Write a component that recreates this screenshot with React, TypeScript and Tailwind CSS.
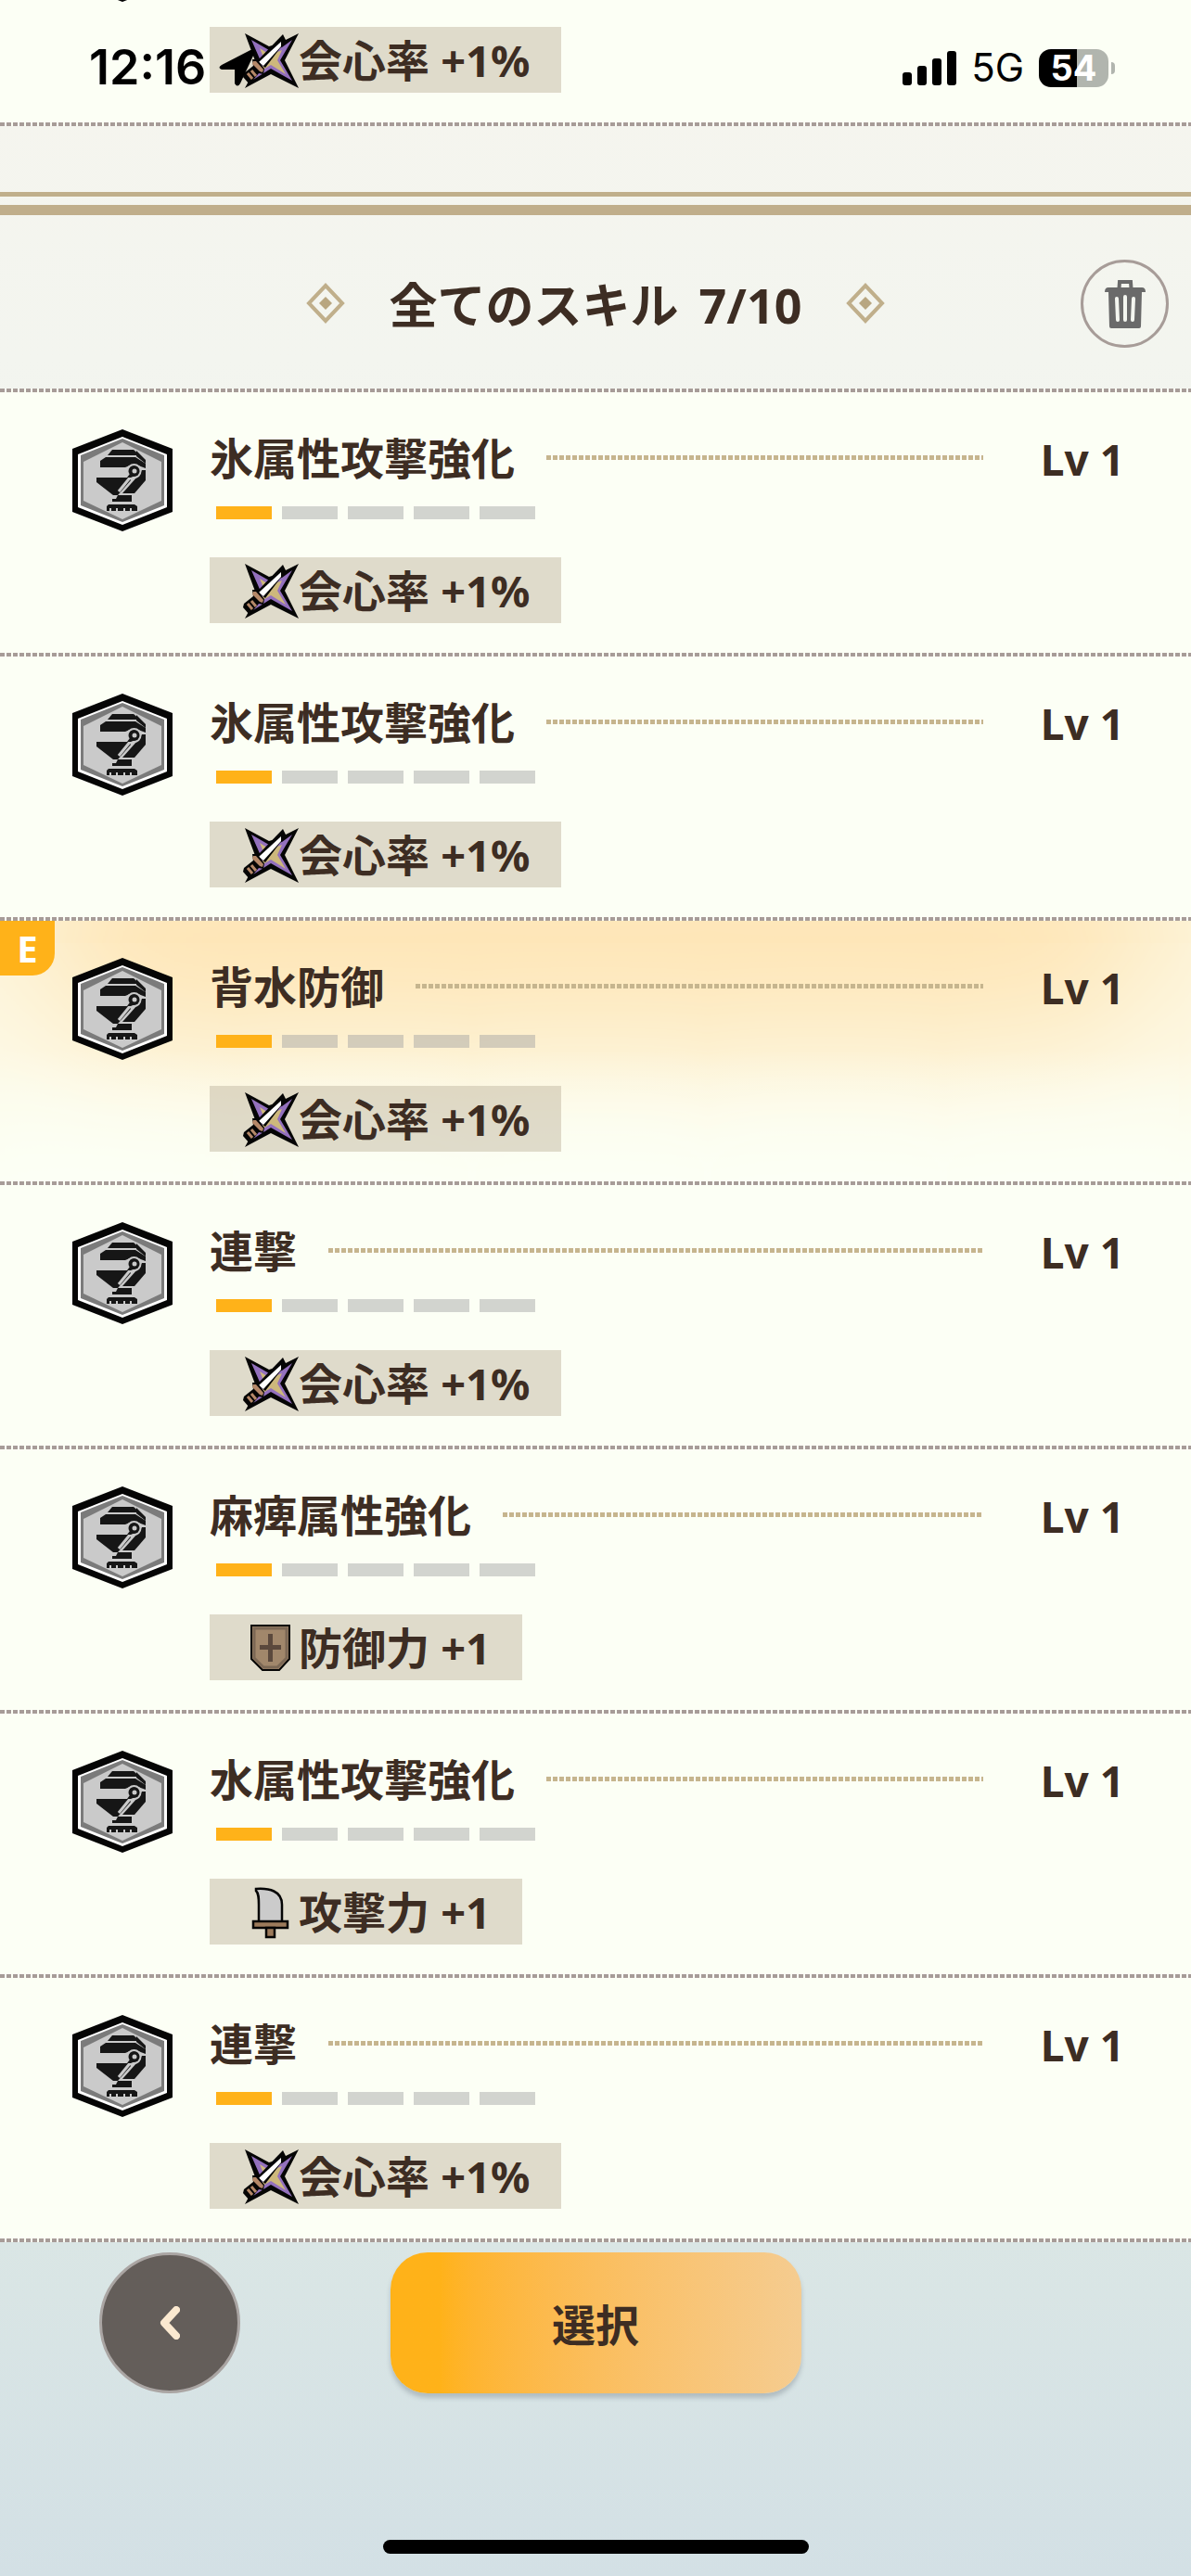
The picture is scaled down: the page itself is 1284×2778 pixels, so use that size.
import React from "react";

type StatKind = "critical" | "defense" | "attack";

type Skill = {
  name: string;
  level: number;
  max: number;
  stat: StatKind;
  equipped?: boolean;
};

const STATS: Record<StatKind, string> = {
  critical: "会心率 +1%",
  defense: "防御力 +1",
  attack: "攻撃力 +1",
};

const SKILLS: Skill[] = [
  { name: "氷属性攻撃強化", level: 1, max: 5, stat: "critical" },
  { name: "氷属性攻撃強化", level: 1, max: 5, stat: "critical" },
  { name: "背水防御", level: 1, max: 5, stat: "critical", equipped: true },
  { name: "連撃", level: 1, max: 5, stat: "critical" },
  { name: "麻痺属性強化", level: 1, max: 5, stat: "defense" },
  { name: "水属性攻撃強化", level: 1, max: 5, stat: "attack" },
  { name: "連撃", level: 1, max: 5, stat: "critical" },
];

function Separator() {
  return (
    <div className="h-1 w-full bg-[#fcfff5] bg-[repeating-linear-gradient(90deg,#a79c98_0px,#a79c98_5px,transparent_5px,transparent_7px)]" />
  );
}

function HexIcon({ className }: { className?: string }) {
  return (
    <svg viewBox="0 0 108 110" className={className} aria-hidden="true">
      <path d="M54 0 108 21V89L54 110 0 89V21Z" fill="#050505" />
      <path d="M54 8 102 27V84L54 103 6 84V27Z" fill="#fff" />
      <path d="M54 10 99 28V82L54 100 9 82V28Z" fill="#7b7b7b" />
      <path d="M54 14 96 35V77L54 97 12 77V35Z" fill="#cacaca" />
      <g fill="#161616">
        <path d="M43 22H66L73 28H38Z" />
        <path d="M30 34 36 30H68L79 37V42L71 39H62L57 41H30Z" />
        <path d="M69 23 79 33V37L69 29Z" />
        <path d="M26 52H61L63 55 49 71H44L26 57Z" />
        <path d="M79 44V55L67 69H54L70 51 75 44Z" />
        <path d="M49 71H64V78H43V75H47Z" />
        <path d="M39 81H67L70 83V88H37V83Z" />
      </g>
      <path d="M63 51 50 67" stroke="#cacaca" strokeWidth="3" />
      <circle cx="66.500" cy="45" r="8" fill="#cacaca" />
      <path d="M62 48 59 52H63L70 49Z" fill="#161616" />
      <circle cx="66.500" cy="45" r="6" fill="#161616" />
      <circle cx="67" cy="45" r="2.500" fill="#cacaca" />
      <path d="M40 85h2v3h-2zM47 85h2v3h-2zM55 85h2v3h-2zM62 85h2v3h-2z" fill="#cacaca" />
    </svg>
  );
}

function CriticalIcon() {
  return (
    <svg viewBox="0 0 60 60" className="size-[60px]" aria-hidden="true">
      <path d="M2 1 28 15 42 11 43 2 46 8 60 1 45 30 60 60 30 45 2 60 15 36Z" fill="#050505" />
      <path d="M9 8 28 19 42 16 53 8 40 30 53 52 30 39 11 51 20 33Z" fill="#9370bd" />
      <path d="M18 17 29 24 42 19 37 30 46 45 30 35 20 41 23 29Z" fill="#cdb87c" />
      <path d="M43 2V13L24 38 15 31Z" fill="#050505" />
      <path d="M41 10V15L22 36 17 32Z" fill="#fff" />
      <path d="M10 29 15 29 23 39 22 45 17 44 7 56 0 48 1 44 11 36Z" fill="#050505" />
      <path d="M11 31 14 31 22 40 21 43 18 42 10 34Z" fill="#b58868" />
      <path d="M9 41 14 47M5 44 10 50" stroke="#b58868" strokeWidth="3" />
    </svg>
  );
}

function DefenseIcon() {
  return (
    <svg viewBox="0 0 60 60" className="size-[60px]" aria-hidden="true">
      <path d="M9 6H50V42L39 54H21L9 42Z" fill="#a1876b" stroke="#050505" strokeWidth="2" />
      <path d="M12 9H47V41L37 51H22L12 41Z" fill="none" stroke="#7c6855" strokeWidth="3" />
      <path d="M29.500 15V45M18 29.500H41" stroke="#5b493d" strokeWidth="5" />
    </svg>
  );
}

function AttackIcon() {
  return (
    <svg viewBox="0 0 60 60" className="size-[60px]" aria-hidden="true">
      <path
        d="M14 5C28 4 42 7 42 22V41H17V22C17 15 17 10 14 7Z"
        fill="#cbcbcb"
        stroke="#050505"
        strokeWidth="2.500"
      />
      <path d="M11 40H48V47H11Z" fill="#9c7a5b" stroke="#050505" strokeWidth="2.500" />
      <path d="M25 47H34V57H25Z" fill="#9c7a5b" stroke="#050505" strokeWidth="2.500" />
    </svg>
  );
}

function StatChip({ kind }: { kind: StatKind }) {
  return (
    <div className="flex h-[71px] w-fit items-center bg-[#c2b7a1]/50 pr-[34px] pl-9 text-[47px] leading-none font-bold whitespace-nowrap">
      {kind === "critical" && <CriticalIcon />}
      {kind === "defense" && <DefenseIcon />}
      {kind === "attack" && <AttackIcon />}
      <span className="pt-0.5">{STATS[kind]}</span>
    </div>
  );
}

function SkillRow({ skill }: { skill: Skill }) {
  return (
    <li>
      <div className="relative bg-[#fcfff5]">
        {skill.equipped && (
          <>
            <div className="absolute inset-0 bg-linear-to-b from-[#fee5b4] from-50% to-[#fcfff5] shadow-[inset_0_-115px_180px_20px_#fcfff5]" />
            <span className="absolute top-0 left-0 flex size-[59px] items-center justify-center rounded-br-3xl bg-[#ffb219] text-[40px] leading-none font-bold text-white">
              E
            </span>
          </>
        )}
        <div className="relative flex gap-10 pt-10 pr-[72px] pb-8 pl-[78px]">
          <HexIcon className="h-[110px] w-[108px] shrink-0" />
          <div className="min-w-0 flex-1">
            <div className="flex h-[61px] items-center text-[47px] leading-none font-bold">
              <h2 className="pt-0.5 whitespace-nowrap">{skill.name}</h2>
              <div className="mx-[34px] h-[5px] flex-1 bg-[repeating-linear-gradient(90deg,#c6b58e_0px,#c6b58e_5px,transparent_5px,transparent_7px)]" />
              <span className="w-[118px] pt-0.5 text-right text-[46px] whitespace-nowrap">Lv {skill.level}</span>
            </div>
            <div className="mt-[22px] flex gap-[11px] pl-[7px]">
              {Array.from({ length: skill.max }, (_, i) => (
                <span
                  key={i}
                  className={i < skill.level ? "h-3.5 w-[60px] bg-[#ffb219]" : "h-3.5 w-[60px] bg-[#a2a2a2]/46"}
                />
              ))}
            </div>
            <div className="mt-[41px]">
              <StatChip kind={skill.stat} />
            </div>
          </div>
        </div>
      </div>
      <Separator />
    </li>
  );
}

function StatusBar() {
  return (
    <div className="absolute inset-x-0 top-0 flex h-[146px] items-center justify-between pr-[82px] pl-24 font-['Inter',sans-serif] text-black">
      <div className="flex items-center gap-3.5">
        <span className="text-[52px] leading-none font-semibold">12:16</span>
        <svg viewBox="0 0 40 40" className="size-10" aria-hidden="true">
          <path d="M3 17 34 1Q39 0 38 5L23 37Q20 42 17 37V22H3Q-2 20 3 17Z" fill="#000" />
        </svg>
      </div>
      <div className="flex items-center">
        <div className="flex items-end gap-1.5">
          <span className="h-3.5 w-2.5 rounded-[3px] bg-black" />
          <span className="h-[21px] w-2.5 rounded-[3px] bg-black" />
          <span className="h-[29px] w-2.5 rounded-[3px] bg-black" />
          <span className="h-[37px] w-2.5 rounded-[3px] bg-black" />
        </div>
        <span className="ml-4 text-[42px] leading-none">5G</span>
        <div className="ml-4 flex items-center gap-[3px]">
          <div className="flex h-[41px] w-[75px] items-center justify-center rounded-[13px] bg-linear-to-r from-black from-55% to-[#b1b5ae] to-55% text-[38px] leading-none font-bold text-white">
            54
          </div>
          <span className="h-[13px] w-1 rounded-r-full bg-[#b1b5ae]" />
        </div>
      </div>
    </div>
  );
}

function Diamond() {
  return (
    <svg viewBox="0 0 42 44" className="h-11 w-[42px]" aria-hidden="true">
      <path d="M21 3 39 22 21 41 3 22Z" fill="none" stroke="#c0af8b" strokeWidth="4" />
      <path d="M21 15 28 22 21 29 14 22Z" fill="#b8a680" />
    </svg>
  );
}

function TrashIcon() {
  return (
    <svg viewBox="0 0 44 52" className="h-[52px] w-11" aria-hidden="true">
      <path d="M15.500 9 16 2H28L28.500 9" fill="none" stroke="#6a6a6a" strokeWidth="4" />
      <path d="M0 13Q0 8 4 8H40Q44 8 44 13Z" fill="#6a6a6a" />
      <path d="M4 12H40L39 50Q39 52 37 52H7Q5 52 5 50Z" fill="#6a6a6a" />
      <path d="M13 20 14 43M22 18V43M31 20 30 43" stroke="#f4f6f0" strokeWidth="4" strokeLinecap="round" />
    </svg>
  );
}

export default function App() {
  return (
    <div className="relative flex min-h-screen flex-col overflow-hidden bg-linear-to-b from-[#f6f5ee] via-[#f3f5ef] via-14% to-[#d3e0e5] font-['Noto_Sans','Noto_Sans_CJK_JP',sans-serif] text-[#3d2d23]">
      <div className="relative overflow-hidden bg-[#fcfff5] pt-[29px] pb-8 pl-[226px]">
        <HexIcon className="absolute -top-[108px] left-[78px] h-[110px] w-[108px]" />
        <StatChip kind="critical" />
      </div>
      <Separator />
      <StatusBar />

      <header className="mt-[71px]">
        <div className="h-[5px] bg-[#c0af8b]" />
        <div className="mt-[9px] h-[11px] bg-[#c0ae8b]" />
        <div className="relative flex h-[187px] items-center justify-center gap-12 pt-0.5">
          <Diamond />
          <h1 className="flex gap-[22px] pt-1 text-[52px] leading-none font-bold whitespace-nowrap">
            <span>全てのスキル</span>
            <span>7/10</span>
          </h1>
          <Diamond />
          <button
            type="button"
            aria-label="削除"
            className="absolute top-12 right-6 flex size-[95px] items-center justify-center rounded-full border-[3px] border-[#a79c98]"
          >
            <TrashIcon />
          </button>
        </div>
        <Separator />
      </header>

      <ul>
        {SKILLS.map((skill, i) => (
          <SkillRow key={i} skill={skill} />
        ))}
      </ul>

      <footer className="flex flex-1 flex-col items-center bg-linear-to-b from-[#dae6e5] to-[#d3e0e5] pt-[11px] pb-6">
        <div className="relative flex w-full justify-center">
          <button
            type="button"
            aria-label="戻る"
            className="absolute top-0 left-[107px] flex size-[152px] items-center justify-center rounded-full border-[3px] border-[#aaa5a3] bg-[#645e5a]"
          >
            <svg viewBox="0 0 22 36" className="h-9 w-[22px]" fill="none" aria-hidden="true">
              <path d="M18 4 5 18 18 32" stroke="#fbe9d0" strokeWidth="8" strokeLinecap="round" strokeLinejoin="round" />
            </svg>
          </button>
          <button
            type="button"
            className="h-[152px] w-[443px] rounded-[40px] bg-linear-to-r from-[#ffb219] from-12% to-[#f5cc90] pt-1 text-[47px] font-bold shadow-[0_5px_5px_rgba(90,100,110,0.3)]"
          >
            選択
          </button>
        </div>
        <div className="mt-auto h-[15px] w-[459px] rounded-full bg-black" />
      </footer>
    </div>
  );
}
